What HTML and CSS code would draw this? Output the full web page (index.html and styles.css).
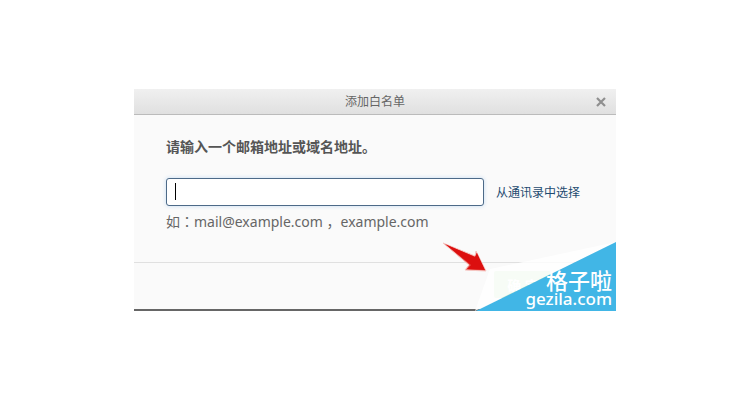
FILE: index.html
```html
<!DOCTYPE html>
<html lang="zh-CN">
  <head>
    <meta charset="UTF-8" />
    <meta name="viewport" content="width=device-width, initial-scale=1.0" />
    <title>添加白名单</title>
    <link rel="stylesheet" href="styles.css">
  </head>
  <body>
    <form class="dialog">
      <div class="header">
        <h1>添加白名单</h1>
        <button type="button" class="close" aria-label="关闭">
          <svg width="10" height="10" viewBox="0 0 10 10">
            <path d="M1 1 L9 9 M9 1 L1 9" stroke="#8f8f8f" stroke-width="2.2" />
          </svg>
        </button>
      </div>
      <div class="content">
        <label for="address">请输入一个邮箱地址或域名地址。</label>
        <div class="row">
          <div class="field">
            <input type="text" id="address" />
            <span class="caret"></span>
          </div>
          <a href="#">从通讯录中选择</a>
        </div>
        <p class="hint" lang="ja">如：mail@example.com ，example.com</p>
      </div>
      <div class="footer">
        <button type="submit" class="ok">确 定</button>
      </div>
      <svg class="arrow" width="46" height="32" viewBox="0 0 46 32">
        <path d="M1 1 L33 14 L34 9 L44 29 L23 28 L27 23 Z" fill="#e8504a" stroke="#f6c8c4" stroke-width="1" />
        <path d="M3 2 L33 15 L35 11 L43 28 L25 27 L29 23 Z" fill="#dc0f0f" />
      </svg>
      <div class="watermark">
        <svg width="141" height="69" viewBox="0 0 141 69">
          <path d="M141 0 L15 27 L0 69 Z" fill="#fff" opacity="0.8" />
          <path d="M141 0 V69 H1 Z" fill="#41b6e6" />
        </svg>
        <div class="mark">
          <span class="name">格子啦</span>
          <span class="site">gezila.com</span>
        </div>
      </div>
    </form>
  </body>
</html>
```
FILE: styles.css
```css
body {
  margin: 0;
  min-height: 100vh;
  display: flex;
  align-items: center;
  justify-content: center;
  background-color: #fff;
  font-family: "Noto Sans", "Noto Sans CJK SC", sans-serif;
  font-size: 14px;
  color: #555;
}

.dialog {
  position: relative;
  width: 100%;
  max-width: 482px;
  background-color: #fafafa;
}

.header {
  display: grid;
  grid-template-columns: 30px 1fr 30px;
  align-items: center;
  height: 25px;
  border-bottom: 1px solid #bbb;
  background: linear-gradient(#f0f0f0, #e0e0e0);
}

.header h1 {
  grid-column: 2;
  margin: 0;
  font-size: 12px;
  line-height: 24px;
  font-weight: normal;
  text-align: center;
  color: #666;
}

.close {
  display: flex;
  justify-content: center;
  padding: 0;
  border: none;
  background: none;
  cursor: pointer;
}

.content {
  padding: 22px 32px 30px;
}

label {
  display: block;
  line-height: 20px;
  font-weight: bold;
}

.row {
  display: flex;
  align-items: center;
  gap: 12px;
  margin-top: 21px;
}

.field {
  position: relative;
  flex: 1;
  max-width: 318px;
}

input[type="text"] {
  display: block;
  width: 100%;
  height: 28px;
  padding: 4px 8px;
  border: 1px solid #4d6a88;
  border-radius: 3px;
  box-sizing: border-box;
  background-color: #fff;
  box-shadow: 0 0 4px #c5dcf2;
  font: inherit;
}

.caret {
  position: absolute;
  left: 9px;
  top: 5px;
  width: 1px;
  height: 17px;
  background-color: #000;
}

.row a {
  font-size: 12px;
  color: #1e4a70;
  text-decoration: none;
}

.hint {
  margin: 6px 0 0;
  font-family: "Noto Sans", "Noto Sans CJK JP", sans-serif;
  line-height: 20px;
  color: #666;
}

.footer {
  display: flex;
  justify-content: flex-end;
  padding: 8px 64px 11px;
  border-top: 1px solid #e0e0e0;
  border-bottom: 2px solid #666;
}

.ok {
  width: 58px;
  height: 27px;
  padding: 0;
  border: none;
  border-radius: 2px;
  background-color: #d5edd0;
  color: #fff;
  font: inherit;
  font-weight: bold;
}

.arrow {
  position: absolute;
  right: 128px;
  bottom: 37px;
}

.watermark {
  position: absolute;
  right: 0;
  bottom: 0;
}

.watermark svg {
  display: block;
}

.mark {
  position: absolute;
  right: 4px;
  bottom: 3px;
  display: flex;
  flex-direction: column;
  align-items: flex-end;
  color: #fff;
}

.name {
  font-size: 22px;
  line-height: 20px;
  font-weight: 500;
}

.site {
  font-size: 17px;
  line-height: 18px;
  font-weight: 500;
}
```
